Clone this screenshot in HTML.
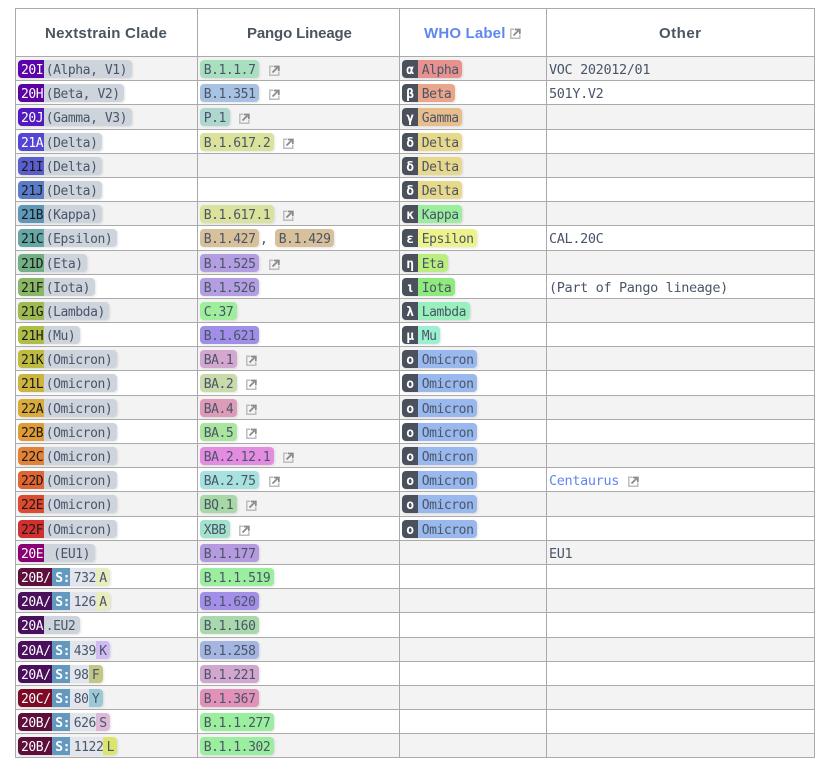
<!DOCTYPE html>
<html><head><meta charset="utf-8"><style>
html,body{margin:0;padding:0;background:#fff;width:826px;height:770px;overflow:hidden}
body{position:relative;font-family:"DejaVu Sans Mono","Liberation Mono",monospace;font-size:13px;letter-spacing:-.43px;color:#4a5568}
.r{position:absolute;left:15px;width:800px;height:24px;border-top:1px solid #aaa;box-sizing:content-box}
.g{background:#f3f3f3}
.v{position:absolute;top:8px;width:1px;height:750px;background:#aaa}
.a,.b,.c,.d{position:absolute;top:3px;height:18px;line-height:21px;white-space:pre}
.a{left:3px}.b{left:185px}.c{left:387px}.d{left:534px;font-size:13.5px;letter-spacing:-.35px;line-height:20px}
.p{display:inline-block;height:18px;line-height:21px;vertical-align:top;box-shadow:1px 1px 2px rgba(0,0,0,.1);border-radius:4px}
.p span{display:inline-block;height:18px;vertical-align:top}
.t{padding:0 3.7px;color:#4a5568}
.k{padding:0 1px 0 3px;border-radius:4px 0 0 4px;color:#fff;position:relative;z-index:1}
.n{color:#1a1a1a}
.o{background:#ced4dc;padding:0 4.5px 0 1.5px;border-radius:0 4px 4px 0}
.s{background:#6499bf;color:#fff;font-weight:bold;padding-left:3.7px}
.m{background:#e2e6ec;padding-left:3.7px}
.l{padding:0 3.3px;border-radius:0 4px 4px 0}
.w{background:#4a515c;color:#fff;font-weight:bold;width:16px;text-align:center;border-radius:4px 0 0 4px}
.x{padding:0 3.7px;border-radius:0 4px 4px 0}
.i{position:absolute;width:11px;height:11px;top:8px}
.h{position:absolute;top:26px;height:16px;font:bold 15px/16px "Liberation Sans",sans-serif;color:#4a5560;white-space:pre}
svg{display:block}
</style></head><body>
<svg width="0" height="0" style="position:absolute"><defs><symbol id="e" viewBox="0 0 11 11"><path d="M4.500 1.200H.8v9h9V6.500" fill="none" stroke="#bdbdbd" stroke-width="1.500"/><path d="M3.500 7.500L8.500 2.500M5 1.500H9.800V6" fill="none" stroke="#8a8a8a" stroke-width="1.800"/></symbol></defs></svg>

<div class="h" style="left:45px;letter-spacing:.23px">Nextstrain Clade</div>
<div class="h" style="left:247px;letter-spacing:-.15px">Pango Lineage</div>
<div class="h" style="left:424px;letter-spacing:.17px;color:#5f87ee">WHO Label</div>
<svg class="i" style="left:510px;top:28px"><use href="#e"/></svg>
<div class="h" style="left:659px;letter-spacing:.5px">Other</div>
<div class="r" style="top:8px;height:47px"></div>

<div class="r g" style="top:56px;height:23px"><div class="a"><span class="p"><span class="k" style="background:#5b02ab">20I</span><span class="o">(Alpha, V1)</span></span></div><div class="b"><span class="p t" style="background:#a8e0bf">B.1.1.7</span></div><svg class="i" style="left:254px"><use href="#e"/></svg><div class="c"><span class="p"><span class="w">α</span><span class="x" style="background:#e8928f">Alpha</span></span></div><div class="d">VOC 202012/01</div></div>
<div class="r" style="top:80px;height:23px"><div class="a"><span class="p"><span class="k" style="background:#5c02a0">20H</span><span class="o">(Beta, V2)</span></span></div><div class="b"><span class="p t" style="background:#a7c2e2">B.1.351</span></div><svg class="i" style="left:254px"><use href="#e"/></svg><div class="c"><span class="p"><span class="w">β</span><span class="x" style="background:#eba58a">Beta</span></span></div><div class="d">501Y.V2</div></div>
<div class="r g" style="top:104px"><div class="a"><span class="p"><span class="k" style="background:#5219bd">20J</span><span class="o">(Gamma, V3)</span></span></div><div class="b"><span class="p t" style="background:#aed8cf">P.1</span></div><svg class="i" style="left:224px"><use href="#e"/></svg><div class="c"><span class="p"><span class="w">γ</span><span class="x" style="background:#e8bd8c">Gamma</span></span></div></div>
<div class="r" style="top:129px;height:23px"><div class="a"><span class="p"><span class="k" style="background:#5445d2">21A</span><span class="o">(Delta)</span></span></div><div class="b"><span class="p t" style="background:#dbe29c">B.1.617.2</span></div><svg class="i" style="left:268px"><use href="#e"/></svg><div class="c"><span class="p"><span class="w">δ</span><span class="x" style="background:#e8d88c">Delta</span></span></div></div>
<div class="r g" style="top:153px;height:23px"><div class="a"><span class="p"><span class="k n" style="background:#5a5dcc">21I</span><span class="o">(Delta)</span></span></div><div class="c"><span class="p"><span class="w">δ</span><span class="x" style="background:#e8d88c">Delta</span></span></div></div>
<div class="r" style="top:177px;height:23px"><div class="a"><span class="p"><span class="k n" style="background:#5b7cc9">21J</span><span class="o">(Delta)</span></span></div><div class="c"><span class="p"><span class="w">δ</span><span class="x" style="background:#e8d88c">Delta</span></span></div></div>
<div class="r g" style="top:201px;height:23px"><div class="a"><span class="p"><span class="k n" style="background:#5f97b8">21B</span><span class="o">(Kappa)</span></span></div><div class="b"><span class="p t" style="background:#dbe29c">B.1.617.1</span></div><svg class="i" style="left:268px"><use href="#e"/></svg><div class="c"><span class="p"><span class="w">κ</span><span class="x" style="background:#9cee9f">Kappa</span></span></div></div>
<div class="r" style="top:225px"><div class="a"><span class="p"><span class="k n" style="background:#65a7a4">21C</span><span class="o">(Epsilon)</span></span></div><div class="b"><span class="p t" style="background:#d7c09a">B.1.427</span></div><div class="b" style="left:245px">,</div><div class="b" style="left:260px"><span class="p t" style="background:#d7c09a">B.1.429</span></div><div class="c"><span class="p"><span class="w">ε</span><span class="x" style="background:#eef28c">Epsilon</span></span></div><div class="d">CAL.20C</div></div>
<div class="r g" style="top:250px;height:23px"><div class="a"><span class="p"><span class="k n" style="background:#72af84">21D</span><span class="o">(Eta)</span></span></div><div class="b"><span class="p t" style="background:#b49ee2">B.1.525</span></div><svg class="i" style="left:254px"><use href="#e"/></svg><div class="c"><span class="p"><span class="w">η</span><span class="x" style="background:#bcee7f">Eta</span></span></div></div>
<div class="r" style="top:274px;height:23px"><div class="a"><span class="p"><span class="k n" style="background:#8ab765">21F</span><span class="o">(Iota)</span></span></div><div class="b"><span class="p t" style="background:#b49ee2">B.1.526</span></div><div class="c"><span class="p"><span class="w">ι</span><span class="x" style="background:#8eea7c">Iota</span></span></div><div class="d">(Part of Pango lineage)</div></div>
<div class="r g" style="top:298px;height:23px"><div class="a"><span class="p"><span class="k n" style="background:#9fba52">21G</span><span class="o">(Lambda)</span></span></div><div class="b"><span class="p t" style="background:#9eee9b">C.37</span></div><div class="c"><span class="p"><span class="w">λ</span><span class="x" style="background:#9af0bd">Lambda</span></span></div></div>
<div class="r" style="top:322px;height:23px"><div class="a"><span class="p"><span class="k n" style="background:#aebd47">21H</span><span class="o">(Mu)</span></span></div><div class="b"><span class="p t" style="background:#a08ee8">B.1.621</span></div><div class="c"><span class="p"><span class="w">μ</span><span class="x" style="background:#9cf0d2">Mu</span></span></div></div>
<div class="r g" style="top:346px;height:23px"><div class="a"><span class="p"><span class="k n" style="background:#bfbb41">21K</span><span class="o">(Omicron)</span></span></div><div class="b"><span class="p t" style="background:#d4a7d1">BA.1</span></div><svg class="i" style="left:231px"><use href="#e"/></svg><div class="c"><span class="p"><span class="w">ο</span><span class="x" style="background:#99b9ee">Omicron</span></span></div></div>
<div class="r" style="top:370px"><div class="a"><span class="p"><span class="k n" style="background:#cdb33f">21L</span><span class="o">(Omicron)</span></span></div><div class="b"><span class="p t" style="background:#c9dbaa">BA.2</span></div><svg class="i" style="left:231px"><use href="#e"/></svg><div class="c"><span class="p"><span class="w">ο</span><span class="x" style="background:#99b9ee">Omicron</span></span></div></div>
<div class="r g" style="top:395px;height:23px"><div class="a"><span class="p"><span class="k n" style="background:#d8ab3c">22A</span><span class="o">(Omicron)</span></span></div><div class="b"><span class="p t" style="background:#dc9cb8">BA.4</span></div><svg class="i" style="left:231px"><use href="#e"/></svg><div class="c"><span class="p"><span class="w">ο</span><span class="x" style="background:#99b9ee">Omicron</span></span></div></div>
<div class="r" style="top:419px;height:23px"><div class="a"><span class="p"><span class="k n" style="background:#e09b39">22B</span><span class="o">(Omicron)</span></span></div><div class="b"><span class="p t" style="background:#a9e59c">BA.5</span></div><svg class="i" style="left:231px"><use href="#e"/></svg><div class="c"><span class="p"><span class="w">ο</span><span class="x" style="background:#99b9ee">Omicron</span></span></div></div>
<div class="r g" style="top:443px;height:23px"><div class="a"><span class="p"><span class="k n" style="background:#e28236">22C</span><span class="o">(Omicron)</span></span></div><div class="b"><span class="p t" style="background:#e48de0">BA.2.12.1</span></div><svg class="i" style="left:268px"><use href="#e"/></svg><div class="c"><span class="p"><span class="w">ο</span><span class="x" style="background:#99b9ee">Omicron</span></span></div></div>
<div class="r" style="top:467px;height:23px"><div class="a"><span class="p"><span class="k n" style="background:#e06533">22D</span><span class="o">(Omicron)</span></span></div><div class="b"><span class="p t" style="background:#a8e2df">BA.2.75</span></div><svg class="i" style="left:254px"><use href="#e"/></svg><div class="c"><span class="p"><span class="w">ο</span><span class="x" style="background:#99b9ee">Omicron</span></span></div><div class="d" style="color:#5f87ee">Centaurus</div><svg class="i" style="left:613px"><use href="#e"/></svg></div>
<div class="r g" style="top:491px"><div class="a"><span class="p"><span class="k n" style="background:#dc4a2f">22E</span><span class="o">(Omicron)</span></span></div><div class="b"><span class="p t" style="background:#a8d8a8">BQ.1</span></div><svg class="i" style="left:231px"><use href="#e"/></svg><div class="c"><span class="p"><span class="w">ο</span><span class="x" style="background:#99b9ee">Omicron</span></span></div></div>
<div class="r" style="top:516px;height:23px"><div class="a"><span class="p"><span class="k n" style="background:#d32f2f">22F</span><span class="o">(Omicron)</span></span></div><div class="b"><span class="p t" style="background:#a3e2cc">XBB</span></div><svg class="i" style="left:224px"><use href="#e"/></svg><div class="c"><span class="p"><span class="w">ο</span><span class="x" style="background:#99b9ee">Omicron</span></span></div></div>
<div class="r g" style="top:540px;height:23px"><div class="a"><span class="p"><span class="k" style="background:#8a0074">20E</span><span class="o"> (EU1)</span></span></div><div class="b"><span class="p t" style="background:#b59ae0">B.1.177</span></div><div class="d">EU1</div></div>
<div class="r" style="top:564px;height:23px"><div class="a"><span class="p"><span class="k" style="background:#5d0e3a">20B/</span><span class="s">S:</span><span class="m">732</span><span class="l" style="background:#e9ecbf">A</span></span></div><div class="b"><span class="p t" style="background:#9cee9f">B.1.1.519</span></div></div>
<div class="r g" style="top:588px;height:23px"><div class="a"><span class="p"><span class="k" style="background:#4a0f5c">20A/</span><span class="s">S:</span><span class="m">126</span><span class="l" style="background:#e9ecbf">A</span></span></div><div class="b"><span class="p t" style="background:#a48fe8">B.1.620</span></div></div>
<div class="r" style="top:612px"><div class="a"><span class="p"><span class="k" style="background:#4a0f5c">20A</span><span class="o">.EU2</span></span></div><div class="b"><span class="p t" style="background:#a8d8ac">B.1.160</span></div></div>
<div class="r g" style="top:637px;height:23px"><div class="a"><span class="p"><span class="k" style="background:#4a0f5c">20A/</span><span class="s">S:</span><span class="m">439</span><span class="l" style="background:#d0bcf2">K</span></span></div><div class="b"><span class="p t" style="background:#a5b5e2">B.1.258</span></div></div>
<div class="r" style="top:661px;height:23px"><div class="a"><span class="p"><span class="k" style="background:#4a0f5c">20A/</span><span class="s">S:</span><span class="m">98</span><span class="l" style="background:#c2c785">F</span></span></div><div class="b"><span class="p t" style="background:#d1a6cf">B.1.221</span></div></div>
<div class="r g" style="top:685px;height:23px"><div class="a"><span class="p"><span class="k" style="background:#7d0a25">20C/</span><span class="s">S:</span><span class="m">80</span><span class="l" style="background:#9bc9d6">Y</span></span></div><div class="b"><span class="p t" style="background:#e291b9">B.1.367</span></div></div>
<div class="r" style="top:709px;height:23px"><div class="a"><span class="p"><span class="k" style="background:#5d0e3a">20B/</span><span class="s">S:</span><span class="m">626</span><span class="l" style="background:#dcb9d8">S</span></span></div><div class="b"><span class="p t" style="background:#9cee9f">B.1.1.277</span></div></div>
<div class="r g" style="top:733px;height:23px"><div class="a"><span class="p"><span class="k" style="background:#5d0e3a">20B/</span><span class="s">S:</span><span class="m">1122</span><span class="l" style="background:#dbe56b">L</span></span></div><div class="b"><span class="p t" style="background:#9cee9f">B.1.1.302</span></div></div>
<div class="r" style="top:757px;height:0"></div>

<div class="v" style="left:15px"></div>
<div class="v" style="left:197px"></div>
<div class="v" style="left:399px"></div>
<div class="v" style="left:546px"></div>
<div class="v" style="left:814px"></div>
</body></html>
